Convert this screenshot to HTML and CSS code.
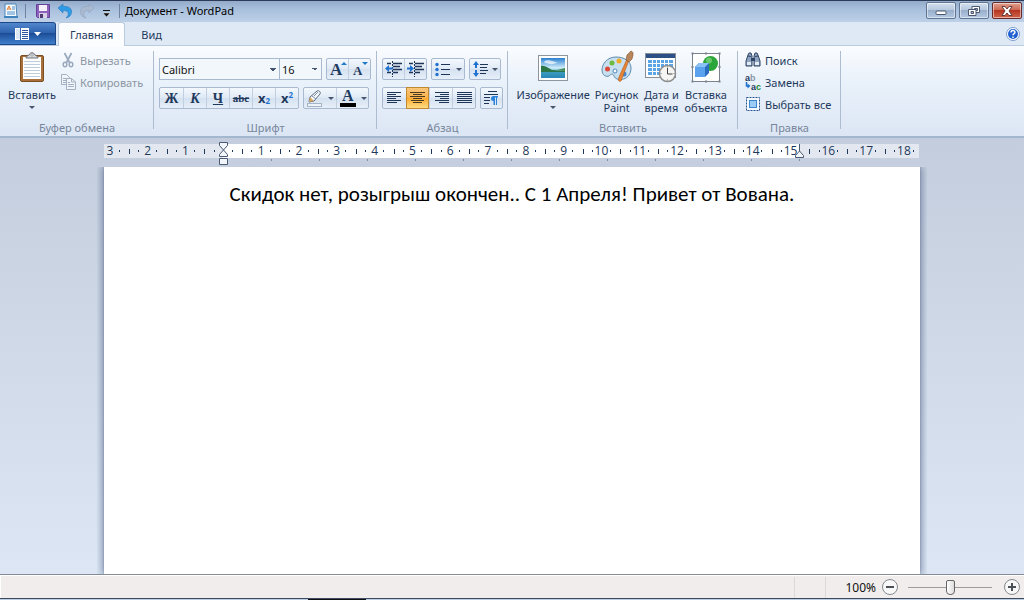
FILE: index.html
```html
<!DOCTYPE html>
<html lang="ru">
    <head>
        <meta charset="utf-8" />
        <meta name="viewport" content="width=device-width, initial-scale=1" />
        <title>Документ - WordPad</title>
        <link rel="stylesheet" href="styles.css">
    </head>
    <body>
        <header class="titlebar">
            <div class="quick">
                <svg class="app-icon" width="16" height="16" viewBox="0 0 16 16">
                    <path d="M2 1h11l1 13H2z" fill="#f6fbff" stroke="#4a86b8" />
                    <path d="M1 14h14" stroke="#3f83bd" stroke-width="2" />
                    <path d="M4 7l2-4 2 4M5 6h2" fill="none" stroke="#e07a2c" />
                    <path d="M9 4h3M9 6h3M4 9h8M4 11h8" stroke="#4a8fca" />
                </svg>
                <span class="divider"></span>
                <button type="button" aria-label="Сохранить">
                    <svg width="16" height="16" viewBox="0 0 16 16">
                        <path d="M1.500 1.500h13v13h-12l-1-1z" fill="#8c62bd" stroke="#65419a" />
                        <path d="M4 2h8v6H4z" fill="#f4f1fb" />
                        <path d="M4 10h8v5H4z" fill="#d9d2e6" />
                        <path d="M5 11h3v4H5z" fill="#4d3a70" />
                    </svg>
                </button>
                <button type="button" aria-label="Отменить">
                    <svg width="16" height="16" viewBox="0 0 16 16">
                        <path d="M1 5l5-4v2.500c6-.5 9 2 8.500 6-.3 3-2.500 5-5.500 5.500 2-2 2.800-3.500 2-5.500-.7-1.600-2.500-2-5-2V10z" fill="#2f9be4" stroke="#2479c0" stroke-width=".6" />
                    </svg>
                </button>
                <button type="button" aria-label="Вернуть">
                    <svg width="16" height="16" viewBox="0 0 16 16">
                        <path d="M15 5l-5-4v2.500c-6-.5-9 2-8.500 6 .3 3 2.500 5 5.500 5.500-2-2-2.800-3.500-2-5.500.7-1.600 2.500-2 5-2V10z" fill="#a9b9cf" stroke="#8fa2bd" stroke-width=".6" />
                    </svg>
                </button>
                <button type="button" aria-label="Настройка панели быстрого доступа">
                    <svg width="16" height="16" viewBox="0 0 16 16">
                        <path d="M2 7.500h7" stroke="#111" />
                        <path d="M2 10h7l-3.500 4z" fill="#111" stroke="#fff" stroke-width=".4" />
                    </svg>
                </button>
                <span class="divider"></span>
            </div>
            <h1>Документ - WordPad</h1>
            <div class="window-buttons">
                <button type="button" aria-label="Свернуть">
                    <svg width="14" height="12" viewBox="0 0 14 12"><rect x="2" y="6" width="10" height="3.500" rx="1" fill="#fff" stroke="#4b5870" /></svg>
                </button>
                <button type="button" aria-label="Восстановить">
                    <svg width="14" height="12" viewBox="0 0 14 12">
                        <path d="M5 1.500h7.500v6H5z" fill="#fff" stroke="#4b5870" />
                        <path d="M7.500 3.500h3v2h-3z" fill="#a9bdd6" stroke="#4b5870" />
                        <path d="M1.500 4.500H9v6H1.500z" fill="#fff" stroke="#4b5870" />
                        <path d="M4 6.500h2.500v2H4z" fill="#a9bdd6" stroke="#4b5870" />
                    </svg>
                </button>
                <button type="button" class="close" aria-label="Закрыть">
                    <svg width="14" height="12" viewBox="0 0 14 12"><path d="M2 1.500h3l2 2.500 2-2.500h3L9 6l3 4.500H9L7 8l-2 2.500H2L5 6z" fill="#fff" stroke="#5a3030" stroke-width=".9" /></svg>
                </button>
            </div>
        </header>

        <nav class="tabs">
            <button type="button" class="file-menu" aria-label="Меню WordPad">
                <svg width="28" height="14" viewBox="0 0 28 14">
                    <rect x="1" y="1" width="14" height="12" fill="#fff" />
                    <path d="M2 3h4M2 5h4M2 7h4M2 9h4M2 11h4" stroke="#b9cdea" />
                    <path d="M6.500 1v12" stroke="#3d6db3" />
                    <path d="M8 3.500h6M8 5.500h6M8 7.500h6M8 9.500h6M8 11.500h6" stroke="#2c569c" />
                    <path d="M20 5h7l-3.500 4z" fill="#fff" />
                </svg>
            </button>
            <a class="tab active" href="#home">Главная</a>
            <a class="tab" href="#view">Вид</a>
            <button type="button" class="help" aria-label="Справка">
                <svg width="14" height="14" viewBox="0 0 14 14">
                    <circle cx="7" cy="7" r="6.500" fill="#fff" stroke="#7d9cd0" />
                    <circle cx="7" cy="7" r="5" fill="#2160d0" />
                    <path d="M5 5.500c0-2.600 4-2.500 4-.3C9 6.600 7 6.600 7 8.300M7 9.500V11" fill="none" stroke="#fff" stroke-width="1.400" />
                </svg>
            </button>
        </nav>

        <div class="ribbon" id="home">
            <section class="group clipboard">
                <div class="group-body">
                    <button type="button" class="big">
                        <svg width="32" height="32" viewBox="0 0 32 32">
                            <rect x="4.500" y="4.500" width="23" height="26" rx="1.500" fill="#a9703a" stroke="#7c4e22" />
                            <path d="M7 6h18v22H7z" fill="#fff" />
                            <path d="M8 10.500h16M8 13.500h16M8 16.500h16M8 19.500h16M8 22.500h16M8 25.500h16" stroke="#bccddd" />
                            <path d="M10 7c0-2 2-2 3-3 1-3 5-3 6 0 1 1 3 1 3 3z" fill="#d8dade" stroke="#6d7178" />
                            <circle cx="16" cy="4" r="1.200" fill="#fff" stroke="#6d7178" stroke-width=".6" />
                        </svg>
                        <span>Вставить</span>
                        <i class="caret"></i>
                    </button>
                    <div class="list">
                        <button type="button" class="small" disabled>
                            <svg width="16" height="16" viewBox="0 0 16 16" fill="none" stroke="#9aa9bd">
                                <path d="M4.500 1l5 9.500M11.500 1l-5 9.500" stroke-width="1.700" />
                                <ellipse cx="5" cy="12.500" rx="1.800" ry="2.300" stroke-width="1.500" />
                                <ellipse cx="11" cy="12.500" rx="1.800" ry="2.300" stroke-width="1.500" />
                            </svg>
                            Вырезать
                        </button>
                        <button type="button" class="small" disabled>
                            <svg width="16" height="16" viewBox="0 0 16 16" fill="#f1f5fa" stroke="#a3b0c2">
                                <path d="M1.500.5h5l3 3v7h-8z" />
                                <path d="M3 4.500h4M3 6.500h4M3 8.500h4" />
                                <path d="M6.500 4.500h5l4 3.500v7.500h-9z" />
                                <path d="M11.500 4.500V8h4M8 8.500h2M8 10.500h6M8 12.500h6" fill="none" />
                            </svg>
                            Копировать
                        </button>
                    </div>
                </div>
                <h2>Буфер обмена</h2>
            </section>

            <section class="group font">
                <div class="group-body rows">
                    <div class="row">
                        <div class="combos">
                            <select class="family" aria-label="Семейство шрифтов"><option>Calibri</option></select>
                            <select class="size" aria-label="Размер шрифта"><option>16</option></select>
                        </div>
                        <div class="set">
                            <button type="button" aria-label="Увеличить размер">
                                <svg width="18" height="18" viewBox="0 0 18 18">
                                    <text class="glyph" x="1" y="15" font-size="17">A</text>
                                    <path d="M12 5h6l-3-3z" fill="#1f78c8" />
                                </svg>
                            </button>
                            <button type="button" aria-label="Уменьшить размер">
                                <svg width="18" height="18" viewBox="0 0 18 18">
                                    <text class="glyph" x="2" y="15" font-size="13">A</text>
                                    <path d="M11 2h6l-3 3z" fill="#1f78c8" />
                                </svg>
                            </button>
                        </div>
                    </div>
                    <div class="row">
                        <div class="set styles">
                            <button type="button" class="bold">Ж</button>
                            <button type="button" class="italic">К</button>
                            <button type="button" class="underline">Ч</button>
                            <button type="button" class="strike">abc</button>
                            <button type="button" class="index">x<sub>2</sub></button>
                            <button type="button" class="index">x<sup>2</sup></button>
                        </div>
                        <div class="set wide">
                            <button type="button" aria-label="Цвет выделения текста">
                                <svg width="17" height="18" viewBox="0 0 17 18">
                                    <path d="M3 13l1-5 7-6c2-1 4 1 3 3l-6 7z" fill="#f3f6fa" stroke="#586b84" />
                                    <path d="M4 8l4 4-5 1z" fill="#d9a860" />
                                    <path d="M6 7l4 3M8 7l4-4" stroke="#7f8fa4" />
                                    <rect x="1.500" y="14.500" width="14" height="3" fill="#eef3f9" stroke="#a5b4c7" />
                                </svg>
                                <i class="caret"></i>
                            </button>
                            <button type="button" aria-label="Цвет текста">
                                <svg width="17" height="18" viewBox="0 0 17 18">
                                    <text class="glyph" x="3" y="12" font-size="16">A</text>
                                    <path d="M1 14h16v4H1z" fill="#000" />
                                </svg>
                                <i class="caret"></i>
                            </button>
                        </div>
                    </div>
                </div>
                <h2>Шрифт</h2>
            </section>

            <section class="group paragraph">
                <div class="group-body rows">
                    <div class="row">
                        <div class="set">
                            <button type="button" aria-label="Уменьшить отступ">
                                <svg width="18" height="16" viewBox="0 0 18 16">
                                    <path d="M8 2.500h9M8 5.500h7M8 8.500h9M8 11.500h5M2 2.500h4M2 11.500h4" stroke="#1f3558" stroke-width="1.500" />
                                    <path d="M7.500 0v16" stroke="#1f3558" stroke-dasharray="2 1" />
                                    <path d="M0 7.500L4 4v2.500h4v2H4V11z" fill="#1f72cf" />
                                </svg>
                            </button>
                            <button type="button" aria-label="Увеличить отступ">
                                <svg width="18" height="16" viewBox="0 0 18 16">
                                    <path d="M8 2.500h9M8 5.500h7M8 8.500h9M8 11.500h5M2 2.500h4M2 11.500h4" stroke="#1f3558" stroke-width="1.500" />
                                    <path d="M7.500 0v16" stroke="#1f3558" stroke-dasharray="2 1" />
                                    <path d="M7 7.500L3 4v2.500H0v2h3V11z" fill="#1f72cf" />
                                </svg>
                            </button>
                        </div>
                        <div class="set wide">
                            <button type="button" aria-label="Маркеры">
                                <svg width="16" height="16" viewBox="0 0 16 16">
                                    <path d="M6 3.500h9M6 8.500h9M6 13.500h9" stroke="#1f3558" />
                                    <circle cx="2" cy="3.500" r="1.700" fill="#1f72cf" />
                                    <circle cx="2" cy="8.500" r="1.700" fill="#1f72cf" />
                                    <circle cx="2" cy="13.500" r="1.700" fill="#1f72cf" />
                                </svg>
                                <i class="caret"></i>
                            </button>
                        </div>
                        <div class="set spacing">
                            <button type="button" aria-label="Междустрочный интервал">
                                <svg width="16" height="16" viewBox="0 0 16 16">
                                    <path d="M7 3.500h8M7 6.500h7M7 9.500h8M7 12.500h6" stroke="#1f3558" />
                                    <path d="M3 0l3 4H4v3H2V4H0zM3 16l3-4H4V9H2v3H0z" fill="#1f72cf" />
                                </svg>
                                <i class="caret"></i>
                            </button>
                        </div>
                    </div>
                    <div class="row">
                        <div class="set aligns">
                            <button type="button" aria-label="По левому краю">
                                <svg width="15" height="12" viewBox="0 0 15 12"><path d="M0 .5h14M0 2.500h9M0 4.500h14M0 6.500h9M0 8.500h14M0 10.500h10" stroke="#1f3558" /></svg>
                            </button>
                            <button type="button" class="pressed" aria-pressed="true" aria-label="По центру">
                                <svg width="15" height="12" viewBox="0 0 15 12"><path d="M0 .5h15M3 2.500h9M0 4.500h15M3 6.500h9M1 8.500h13M3 10.500h9" stroke="#4a3a22" /></svg>
                            </button>
                            <button type="button" aria-label="По правому краю">
                                <svg width="15" height="12" viewBox="0 0 15 12"><path d="M1 .5h14M6 2.500h9M1 4.500h14M6 6.500h9M1 8.500h14M5 10.500h10" stroke="#1f3558" /></svg>
                            </button>
                            <button type="button" aria-label="По ширине">
                                <svg width="15" height="12" viewBox="0 0 15 12"><path d="M0 .5h15M0 2.500h15M0 4.500h15M0 6.500h15M0 8.500h15M0 10.500h15" stroke="#1f3558" /></svg>
                            </button>
                        </div>
                        <div class="set">
                            <button type="button" aria-label="Абзац">
                                <svg width="15" height="16" viewBox="0 0 15 16">
                                    <path d="M4 1.500h9M0 4.500h14M0 7.500h6M0 10.500h6M0 13.500h5" stroke="#1f3558" />
                                    <path d="M14 6H9.500a2.500 2.500 0 000 5v4H11V7.500h1V15h1V7.500h1z" fill="#2a82dc" />
                                </svg>
                            </button>
                        </div>
                    </div>
                </div>
                <h2>Абзац</h2>
            </section>

            <section class="group insert">
                <div class="group-body">
                    <button type="button" class="big">
                        <svg width="32" height="32" viewBox="0 0 32 32">
                            <defs>
                                <linearGradient id="sky" x2="0" y2="1">
                                    <stop offset="0" stop-color="#2a7fd0" />
                                    <stop offset=".5" stop-color="#d2effb" />
                                    <stop offset=".7" stop-color="#3b9cbd" />
                                    <stop offset="1" stop-color="#2a86b8" />
                                </linearGradient>
                            </defs>
                            <rect x="1.500" y="4.500" width="29" height="25" fill="#fff" stroke="#8d949c" />
                            <path d="M4 7h24v20H4z" fill="url(#sky)" />
                            <path d="M4 15c4-1 7 2 11 4l13 1v1H4z" fill="#2c7648" />
                            <path d="M20 19l4-1 4-1v3z" fill="#448d57" />
                            <path d="M7 11c3-3 6-1 8-1s4 2 6 1-4 3-8 2-4 0-6-2z" fill="#fff" opacity=".7" />
                        </svg>
                        <span>Изображение</span>
                        <i class="caret"></i>
                    </button>
                    <button type="button" class="big">
                        <svg width="32" height="32" viewBox="0 0 32 32">
                            <path d="M15 6C6 6 1 13 1 19c0 6 5 7 7 6 2-2 4-3 5 0 2 6 17 5 17-8 0-7-7-11-15-11z" fill="#c8dfef" stroke="#5e8caf" />
                            <circle cx="6.500" cy="18" r="2.500" fill="#db4a38" />
                            <circle cx="11" cy="12" r="2.500" fill="#6dbb3c" />
                            <circle cx="18" cy="10" r="2.500" fill="#f1ac2c" />
                            <circle cx="14" cy="20" r="2" fill="#fff" stroke="#4b88b8" />
                            <circle cx="23" cy="23" r="2.500" fill="#4387d6" />
                            <path d="M26 8l2 1-8 21c-3 1-3-1-2-4z" fill="#e98635" stroke="#ad5819" stroke-width=".6" />
                            <path d="M25 9l1-5 4-4c2 1 2 1 2 4l-1 4-3 3z" fill="#b9855a" stroke="#80532f" stroke-width=".6" />
                        </svg>
                        <span>Рисунок<br />Paint</span>
                    </button>
                    <button type="button" class="big">
                        <svg width="32" height="32" viewBox="0 0 32 32">
                            <rect x=".5" y="2.500" width="30" height="24" fill="#fff" stroke="#8b8f98" />
                            <path d="M1 3h29v4H1z" fill="#2c4f86" />
                            <path d="M3 9h25v15H3z" fill="#5aa5e6" />
                            <path d="M3 12.500h25M3 16.500h25M3 20.500h25M7.500 9v15M11.500 9v15M15.500 9v15M19.500 9v15M23.500 9v15" stroke="#fff" />
                            <circle cx="22.500" cy="22.500" r="8" fill="#f5f5f3" stroke="#8c8c8c" stroke-width="1.500" />
                            <path d="M22.500 17v6h5" fill="none" stroke="#444" />
                            <path d="M22.500 15.500v1M22.500 28.500v1M15.500 22.500h1M28.500 22.500h1" stroke="#777" />
                        </svg>
                        <span>Дата и<br />время</span>
                    </button>
                    <button type="button" class="big">
                        <svg width="32" height="32" viewBox="0 0 32 32">
                            <rect x="2.500" y="2.500" width="27" height="28" fill="#fff" stroke="#7a828d" />
                            <circle cx="20.500" cy="12.500" r="7.500" fill="#2ba53a" />
                            <circle cx="19" cy="9.500" r="3" fill="#69c76c" />
                            <path d="M5 16l4-4h10v10l-4 4H5z" fill="#2b6dc0" />
                            <path d="M5 16h10v10H5z" fill="#5aa2ee" />
                            <path d="M5 16l4-4h10l-4 4z" fill="#8ac2f7" />
                            <path d="M1.500 1.500h2v2h-2zM15 1.500h2v2h-2zM28.500 1.500h2v2h-2zM1.500 15h2v2h-2zM28.500 15h2v2h-2zM1.500 29.500h2v2h-2zM15 29.500h2v2h-2zM28.500 29.500h2v2h-2z" fill="#7a828d" />
                        </svg>
                        <span>Вставка<br />объекта</span>
                    </button>
                </div>
                <h2>Вставить</h2>
            </section>

            <section class="group editing">
                <div class="group-body">
                    <div class="list">
                        <button type="button" class="small">
                            <svg width="16" height="16" viewBox="0 0 16 16">
                                <path d="M3 3l1-2h2l1 3v10H1V9zM13 3l-1-2h-2L9 4v10h6V9z" fill="#8fa4bf" stroke="#2f4567" />
                                <path d="M6 6h4v3H6z" fill="#2f4567" />
                                <path d="M2 10h4v3H2zM10 10h4v3h-4z" fill="#e3ebf5" />
                                <path d="M3 4l3 .5M10 4.500L13 4" stroke="#2f4567" />
                            </svg>
                            Поиск
                        </button>
                        <button type="button" class="small">
                            <svg width="16" height="16" viewBox="0 0 16 16">
                                <text class="mini" x="0" y="7">a<tspan fill="#8b97a8">b</tspan></text>
                                <text class="mini" x="6" y="16">a<tspan fill="#1d8a35">c</tspan></text>
                                <path d="M1.500 8v4H3" fill="none" stroke="#1f72cf" stroke-width="1.500" />
                                <path d="M2.500 9.500L5.500 12l-3 2.500z" fill="#1f72cf" />
                            </svg>
                            Замена
                        </button>
                        <button type="button" class="small">
                            <svg width="16" height="16" viewBox="0 0 16 16">
                                <rect x="1.500" y="1.500" width="13" height="13" fill="#f4f9ff" stroke="#24508c" stroke-dasharray="2 1" />
                                <rect x="4.500" y="4.500" width="7" height="7" fill="#9accf5" stroke="#3d86cd" />
                            </svg>
                            Выбрать все
                        </button>
                    </div>
                </div>
                <h2>Правка</h2>
            </section>
        </div>

        <main class="workspace">
            <div class="ruler">
                <ol class="scale">
                    <li>3</li><li>2</li><li>1</li><li></li>
                    <li>1</li><li>2</li><li>3</li><li>4</li><li>5</li><li>6</li>
                    <li>7</li><li>8</li><li>9</li><li>10</li><li>11</li><li>12</li>
                    <li>13</li><li>14</li><li>15</li><li>16</li><li>17</li><li>18</li>
                </ol>
                <div class="stops"></div>
                <svg class="marker indent" width="11" height="24" viewBox="0 0 11 24" fill="#f2f6fb" stroke="#4a5a74">
                    <path d="M1.500 1.500h8v3L5.500 9l-4-4.500z" />
                    <path d="M5.500 9l4 4.500v2h-8v-2z" />
                    <path d="M1.500 17.500h8v6h-8z" />
                </svg>
                <svg class="marker margin" width="11" height="24" viewBox="0 0 11 24" fill="#f2f6fb" stroke="#4a5a74">
                    <path d="M5.500 3v7" />
                    <path d="M5.500 10l4 4.500v2h-8v-2z" />
                </svg>
            </div>
            <article class="page">
                <p>Скидок нет, розыгрыш окончен.. С 1 Апреля! Привет от Вована.</p>
            </article>
        </main>

        <footer class="status">
            <span class="cell"></span>
            <label for="zoom">100%</label>
            <button type="button" aria-label="Уменьшить">
                <svg width="18" height="18" viewBox="0 0 18 18">
                    <circle cx="9" cy="9" r="7.500" fill="#f8f8f8" stroke="#85898f" />
                    <path d="M5 9h8" stroke="#4b5056" stroke-width="2" />
                </svg>
            </button>
            <input type="range" id="zoom" min="0" max="100" value="50" />
            <button type="button" aria-label="Увеличить">
                <svg width="18" height="18" viewBox="0 0 18 18">
                    <circle cx="9" cy="9" r="7.500" fill="#f8f8f8" stroke="#85898f" />
                    <path d="M5 9h8M9 5v8" stroke="#4b5056" stroke-width="2" />
                </svg>
            </button>
        </footer>
        <div class="taskbar"><span></span></div>
    </body>
</html>
```
FILE: styles.css
```css
* {
    box-sizing: border-box;
}

body {
    margin: 0;
    height: 100vh;
    display: flex;
    flex-direction: column;
    overflow: hidden;
    font-family: "Noto Sans", "Open Sans", sans-serif;
    font-size: 11px;
    line-height: 13px;
    color: #1e395b;
}

button,
select {
    font: inherit;
    color: inherit;
}

button {
    display: flex;
    align-items: center;
    justify-content: center;
    padding: 0;
    border: 0;
    background: none;
}

svg {
    display: block;
    flex: none;
    overflow: visible;
}

h1,
h2,
p,
ol {
    margin: 0;
    padding: 0;
    font-weight: normal;
}

/* title bar */
.titlebar {
    display: flex;
    align-items: center;
    height: 22px;
    padding: 0 2px 2px 3px;
    border-top: 1px solid #2c3c58;
    background: linear-gradient(#93aac9, #a9c0dd 40%, #bdd0e7);
}

.quick {
    display: flex;
    align-items: center;
    gap: 6px;
}

.divider {
    width: 1px;
    height: 14px;
    background: #71839c;
}

.app-icon + .divider {
    margin: 0 3px 0 0;
}

.quick .divider:last-child {
    margin-left: -4px;
}

.titlebar h1 {
    flex: 1;
    padding-left: 5px;
    font-size: 11px;
    line-height: 16px;
    color: #000;
}

.window-buttons {
    display: flex;
    gap: 3px;
}

.window-buttons button {
    width: 30px;
    height: 17px;
    border: 1px solid #5f7593;
    border-radius: 2px;
    background: linear-gradient(#d3dfee, #b6c8de 48%, #98aecb 50%, #b4c9e2);
    box-shadow: inset 0 0 0 1px rgba(255, 255, 255, 0.5);
}

.window-buttons .close {
    border-color: #6b2a2a;
    background: linear-gradient(#e0a090, #cc6650 48%, #b43621 50%, #d0654b);
}

/* tabs */
.tabs {
    display: flex;
    height: 24px;
    background: #dfe9f5;
    border-bottom: 1px solid #bacbe0;
}

.file-menu {
    width: 56px;
    height: 23px;
    margin-right: 2px;
    border: 1px solid #1d4788;
    border-left: 0;
    border-radius: 0 3px 0 0;
    background: linear-gradient(#5287cc, #2c62ae 48%, #1d4d97 50%, #3f80cc);
}

.tab {
    height: 24px;
    padding: 6px 12px 0;
    color: #1e395b;
    text-decoration: none;
}

.tab.active {
    margin-right: 4px;
    padding: 5px 11px 0;
    border: 1px solid #bacbe0;
    border-bottom: 0;
    border-radius: 3px 3px 0 0;
    background: #fbfdff;
}

.help {
    margin-left: auto;
    padding-right: 4px;
}

/* ribbon */
.ribbon {
    display: flex;
    height: 92px;
    padding-top: 5px;
    background: linear-gradient(#fafcff, #e9f1fa 40%, #dce6f4);
    border-bottom: 2px solid #a3b7cf;
}

/* the separator stops short of the group title's bottom */
.group {
    display: flex;
    flex-direction: column;
    flex: none;
    height: 84px;
    background: linear-gradient(#adbccf, #adbccf) right top / 1px 78px no-repeat;
}

.group-body {
    display: flex;
    flex: 1;
}

.group h2 {
    font-size: 11px;
    line-height: 13px;
    padding-bottom: 1px;
    text-align: center;
    color: #76859b;
}

.clipboard {
    width: 154px;
}

.clipboard .group-body {
    padding-left: 6px;
}

.font {
    width: 223px;
}

.paragraph {
    width: 131px;
}

.insert {
    width: 230px;
}

.insert .group-body {
    justify-content: center;
    gap: 5px;
    padding-right: 2px;
}

.editing {
    width: 103px;
}

.editing .group-body {
    padding-left: 7px;
}

.big {
    flex-direction: column;
    justify-content: flex-start;
    min-width: 36px;
}

.clipboard .big {
    width: 52px;
}

.big span {
    margin-top: 5px;
}

.big .caret {
    margin-top: 5px;
}

.caret {
    width: 0;
    border: 3px solid transparent;
    border-top: 3px solid #44546c;
    border-bottom: 0;
}

.list {
    display: flex;
    flex-direction: column;
    margin-top: -2px;
}

.small {
    justify-content: flex-start;
    gap: 4px;
    height: 22px;
    white-space: nowrap;
}

.small:disabled {
    color: #8d96a3;
}

.clipboard .list {
    padding-left: 2px;
}

.rows {
    flex-direction: column;
    gap: 7px;
    padding: 7px 0 0 5px;
}

.row,
.combos {
    display: flex;
}

.row {
    gap: 4px;
}

.combos select {
    height: 22px;
    padding: 0 2px;
    border: 1px solid #a9bad0;
    border-radius: 0;
    color: #111;
    appearance: none;
    background: linear-gradient(135deg, #44546c 50%, transparent 50%) right 3px center / 3px 3px no-repeat,
        linear-gradient(225deg, #44546c 50%, transparent 50%) right 6px center / 3px 3px no-repeat,
        #f2f7fc;
}

.family {
    width: 121px;
}

.combos .size {
    width: 43px;
    margin-left: -1px;
}

.set {
    display: flex;
    height: 22px;
    border: 1px solid #a9bad0;
    border-radius: 2px;
    background: linear-gradient(#f3f8fd, #dfe9f5 50%, #d5e1f0 50%, #e6eff9);
}

.set button {
    width: 21px;
}

.set button + button {
    border-left: 1px solid #c0cedf;
    width: 22px;
}

.set.wide button,
.set.wide button + button {
    width: 32px;
    gap: 5px;
}

.set.spacing button {
    width: 30px;
    gap: 3px;
}

.set.aligns button,
.set.styles button {
    width: 23px;
}

.set.aligns .pressed {
    margin: -1px 0;
    border: 1px solid #c28a30;
    background: linear-gradient(#f8c67c, #fbb24a 48%, #fca92d 50%, #fedc82);
}

.glyph,
.bold,
.italic,
.underline,
.strike {
    font-family: "Liberation Serif", serif;
    font-weight: bold;
    fill: #1f3a5f;
}

.bold,
.italic,
.underline {
    font-size: 14px;
}

.italic {
    font-style: italic;
}

.underline {
    text-decoration: underline;
}

.strike {
    font-size: 11px;
    text-decoration: line-through;
}

.index {
    font-family: "Open Sans", sans-serif;
    font-size: 13px;
    font-weight: bold;
}

.index sub,
.index sup {
    font-size: 8px;
    line-height: 8px;
    color: #1f72cf;
}

.index sub {
    align-self: flex-end;
    padding-bottom: 3px;
}

.index sup {
    align-self: flex-start;
    padding-top: 3px;
}

.mini {
    font-family: "Liberation Sans", sans-serif;
    font-size: 9px;
    font-weight: bold;
    fill: #1f3a5f;
}

/* document area */
.workspace {
    flex: 1;
    display: flex;
    flex-direction: column;
    align-items: center;
    min-height: 0;
    padding-top: 6px;
    background: linear-gradient(#c3cddd, #dce6f4);
}

.ruler {
    position: relative;
    width: 100%;
    max-width: 816px;
    height: 23px;
    flex: none;
    padding-right: 1px;
    background: linear-gradient(#fff, #fff) 119px 0 / 576px 14px no-repeat,
        linear-gradient(#e3e8f0, #e3e8f0) 0 0 / calc(100% - 1px) 14px no-repeat;
}

.scale {
    display: flex;
    height: 14px;
    margin: 0 -4px 0 -13px;
    list-style: none;
}

/* centimetre: half mark on the left edge, quarter dots around the number */
.scale li {
    flex: 1;
    text-align: center;
    font-family: "Open Sans", sans-serif;
    font-size: 12px;
    line-height: 14px;
    background: linear-gradient(#1e395b, #1e395b) left center / 1px 5px no-repeat,
        linear-gradient(#1e395b, #1e395b) 25% center / 1px 2px no-repeat,
        linear-gradient(#1e395b, #1e395b) 75% center / 1px 2px no-repeat;
}

.scale li:first-child {
    background: linear-gradient(#1e395b, #1e395b) 75% center / 1px 2px no-repeat;
}

.stops {
    width: 529px;
    height: 2px;
    margin: 1px 0 0 167px;
    background: repeating-linear-gradient(90deg, #8291a8 0 1px, transparent 1px 48px);
}

.marker {
    position: absolute;
    top: -3px;
}

.marker.indent {
    left: 114px;
}

.marker.margin {
    left: 690px;
}

.page {
    flex: 1;
    width: 100%;
    max-width: 816px;
    padding: 15px 100px 0;
    background: #fff;
    box-shadow: 0 0 1px #6f7f99, 0 0 8px 1px rgba(60, 80, 120, 0.7);
    clip-path: inset(0 -7px);
    text-align: center;
}

.page p {
    font-family: Carlito, Lato, "Noto Sans", sans-serif;
    font-size: 21px;
    line-height: 24px;
    color: #000;
}

/* status bar */
.status {
    display: flex;
    align-items: center;
    justify-content: flex-end;
    height: 24px;
    padding: 1px 3px 0 0;
    border-top: 1px solid #858b95;
    background: #f0edec;
    box-shadow: inset 1px 1px #fff;
    color: #111;
}

.status .cell {
    width: 32px;
    height: 21px;
    margin-right: 19px;
    border: solid #dcdad9;
    border-width: 0 1px;
}

.status label {
    padding-right: 5px;
    font-size: 12px;
}

.status input {
    width: 84px;
    height: 18px;
    margin: 0 11px 0 9px;
    appearance: none;
    background: linear-gradient(#9c9c9c, #9c9c9c) center / 100% 1px no-repeat;
}

.status input::-webkit-slider-thumb {
    appearance: none;
    width: 9px;
    height: 15px;
    border: 1px solid #666;
    border-radius: 2px 2px 4px 4px;
    background: linear-gradient(90deg, #fff, #dcdcdc);
}

.taskbar {
    height: 2px;
    padding-left: 308px;
    border-top: 1px solid #3b4a60;
    background: #bccde2;
}

.taskbar span {
    display: block;
    width: 58px;
    height: 1px;
    background: #111;
}
```
